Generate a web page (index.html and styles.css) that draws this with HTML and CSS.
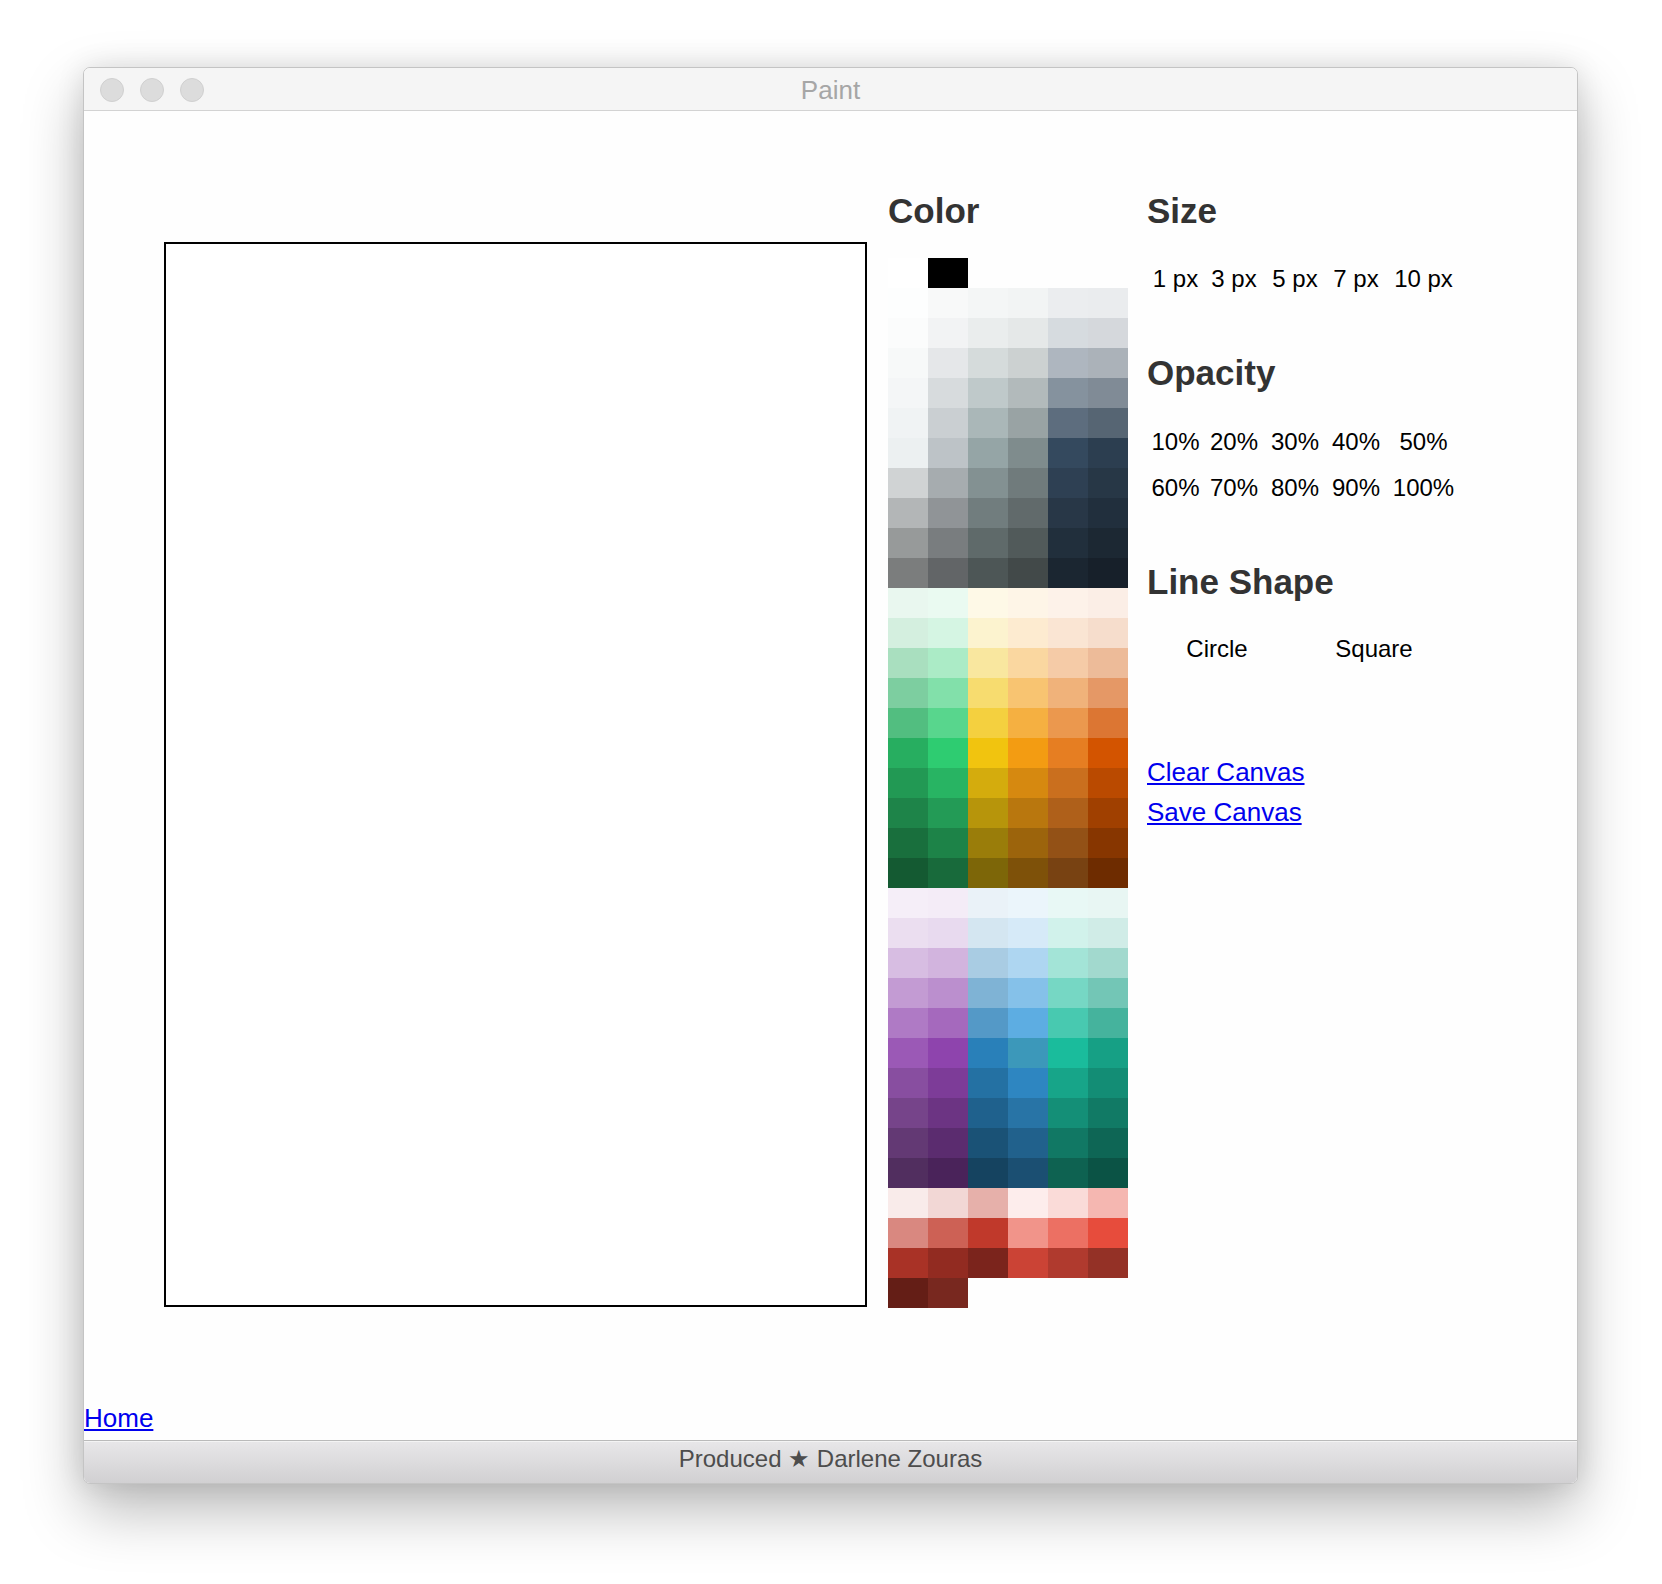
FILE: index.html
```html
<!DOCTYPE html>
<html lang="en">
<head>
<meta charset="utf-8">
<title>Paint</title>
<link rel="stylesheet" href="styles.css">
</head>
<body>
<div class="window">
  <div class="titlebar">
    <div class="lights"><span class="light"></span><span class="light"></span><span class="light"></span></div>
    <div class="title">Paint</div>
    <div></div>
  </div>
  <div class="content">
    <div class="main">
      <div class="canvas"></div>
      <div class="color-col">
        <h2 class="heading">Color</h2>
        <div class="palette-top">
          <i class="sw" style="background:#ffffff"></i><i class="sw" style="background:#000000"></i>
        </div>
        <div class="palette">
          <i style="background:#FDFEFE"></i><i style="background:#F8F9F9"></i><i style="background:#F4F6F6"></i><i style="background:#F2F4F4"></i><i style="background:#EBEDEF"></i><i style="background:#EAECEE"></i>
          <i style="background:#FBFCFC"></i><i style="background:#F2F3F4"></i><i style="background:#EAEDED"></i><i style="background:#E5E8E8"></i><i style="background:#D6DBDF"></i><i style="background:#D5D8DC"></i>
          <i style="background:#F7F9F9"></i><i style="background:#E5E7E9"></i><i style="background:#D5DBDB"></i><i style="background:#CCD1D1"></i><i style="background:#AEB6BF"></i><i style="background:#ABB2B9"></i>
          <i style="background:#F4F6F7"></i><i style="background:#D7DBDD"></i><i style="background:#BFC9CA"></i><i style="background:#B2BABB"></i><i style="background:#85929E"></i><i style="background:#808B96"></i>
          <i style="background:#F0F3F4"></i><i style="background:#CACFD2"></i><i style="background:#AAB7B8"></i><i style="background:#99A3A4"></i><i style="background:#5D6D7E"></i><i style="background:#566573"></i>
          <i style="background:#ECF0F1"></i><i style="background:#BDC3C7"></i><i style="background:#95A5A6"></i><i style="background:#7F8C8D"></i><i style="background:#34495E"></i><i style="background:#2C3E50"></i>
          <i style="background:#D0D3D4"></i><i style="background:#A6ACAF"></i><i style="background:#839192"></i><i style="background:#707B7C"></i><i style="background:#2E4053"></i><i style="background:#273746"></i>
          <i style="background:#B3B6B7"></i><i style="background:#909497"></i><i style="background:#717D7E"></i><i style="background:#616A6B"></i><i style="background:#283747"></i><i style="background:#212F3D"></i>
          <i style="background:#979A9A"></i><i style="background:#797D7F"></i><i style="background:#5F6A6A"></i><i style="background:#515A5A"></i><i style="background:#212F3C"></i><i style="background:#1C2833"></i>
          <i style="background:#7B7D7D"></i><i style="background:#626567"></i><i style="background:#4D5656"></i><i style="background:#424949"></i><i style="background:#1B2631"></i><i style="background:#17202A"></i>

          <i style="background:#E9F7EF"></i><i style="background:#EAFAF1"></i><i style="background:#FEF9E7"></i><i style="background:#FEF5E7"></i><i style="background:#FDF2E9"></i><i style="background:#FBEEE6"></i>
          <i style="background:#D4EFDF"></i><i style="background:#D5F5E3"></i><i style="background:#FCF3CF"></i><i style="background:#FDEBD0"></i><i style="background:#FAE5D3"></i><i style="background:#F6DDCC"></i>
          <i style="background:#A9DFBF"></i><i style="background:#ABEBC6"></i><i style="background:#F9E79F"></i><i style="background:#FAD7A0"></i><i style="background:#F5CBA7"></i><i style="background:#EDBB99"></i>
          <i style="background:#7DCEA0"></i><i style="background:#82E0AA"></i><i style="background:#F7DC6F"></i><i style="background:#F8C471"></i><i style="background:#F0B27A"></i><i style="background:#E59866"></i>
          <i style="background:#52BE80"></i><i style="background:#58D68D"></i><i style="background:#F4D03F"></i><i style="background:#F5B041"></i><i style="background:#EB984E"></i><i style="background:#DC7633"></i>
          <i style="background:#27AE60"></i><i style="background:#2ECC71"></i><i style="background:#F1C40F"></i><i style="background:#F39C12"></i><i style="background:#E67E22"></i><i style="background:#D35400"></i>
          <i style="background:#229954"></i><i style="background:#28B463"></i><i style="background:#D4AC0D"></i><i style="background:#D68910"></i><i style="background:#CA6F1E"></i><i style="background:#BA4A00"></i>
          <i style="background:#1E8449"></i><i style="background:#239B56"></i><i style="background:#B7950B"></i><i style="background:#B9770E"></i><i style="background:#AF601A"></i><i style="background:#A04000"></i>
          <i style="background:#196F3D"></i><i style="background:#1D8348"></i><i style="background:#9A7D0A"></i><i style="background:#9C640C"></i><i style="background:#935116"></i><i style="background:#873600"></i>
          <i style="background:#145A32"></i><i style="background:#186A3B"></i><i style="background:#7D6608"></i><i style="background:#7E5109"></i><i style="background:#784212"></i><i style="background:#6E2C00"></i>

          <i style="background:#F5EEF8"></i><i style="background:#F4ECF7"></i><i style="background:#EAF2F8"></i><i style="background:#EBF5FB"></i><i style="background:#E8F8F5"></i><i style="background:#E8F6F3"></i>
          <i style="background:#EBDEF0"></i><i style="background:#E8DAEF"></i><i style="background:#D4E6F1"></i><i style="background:#D6EAF8"></i><i style="background:#D1F2EB"></i><i style="background:#D0ECE7"></i>
          <i style="background:#D7BDE2"></i><i style="background:#D2B4DE"></i><i style="background:#A9CCE3"></i><i style="background:#AED6F1"></i><i style="background:#A3E4D7"></i><i style="background:#A2D9CE"></i>
          <i style="background:#C39BD3"></i><i style="background:#BB8FCE"></i><i style="background:#7FB3D5"></i><i style="background:#85C1E9"></i><i style="background:#76D7C4"></i><i style="background:#73C6B6"></i>
          <i style="background:#AF7AC5"></i><i style="background:#A569BD"></i><i style="background:#5499C7"></i><i style="background:#5DADE2"></i><i style="background:#48C9B0"></i><i style="background:#45B39D"></i>
          <i style="background:#9B59B6"></i><i style="background:#8E44AD"></i><i style="background:#2980B9"></i><i style="background:#3C98BA"></i><i style="background:#1ABC9C"></i><i style="background:#16A085"></i>
          <i style="background:#884EA0"></i><i style="background:#7D3C98"></i><i style="background:#2471A3"></i><i style="background:#2E86C1"></i><i style="background:#17A589"></i><i style="background:#138D75"></i>
          <i style="background:#76448A"></i><i style="background:#6C3483"></i><i style="background:#1F618D"></i><i style="background:#2874A6"></i><i style="background:#148F77"></i><i style="background:#117A65"></i>
          <i style="background:#633974"></i><i style="background:#5B2C6F"></i><i style="background:#1A5276"></i><i style="background:#21618C"></i><i style="background:#117864"></i><i style="background:#0E6655"></i>
          <i style="background:#512E5F"></i><i style="background:#4A235A"></i><i style="background:#154360"></i><i style="background:#1B4F72"></i><i style="background:#0E6251"></i><i style="background:#0B5345"></i>

          <i style="background:#F9EBEA"></i><i style="background:#F2D7D5"></i><i style="background:#E6B0AA"></i><i style="background:#FDEDEC"></i><i style="background:#FADBD8"></i><i style="background:#F5B7B1"></i>
          <i style="background:#D98880"></i><i style="background:#CD6155"></i><i style="background:#C0392B"></i><i style="background:#F1948A"></i><i style="background:#EC7063"></i><i style="background:#E74C3C"></i>
          <i style="background:#A93226"></i><i style="background:#922B21"></i><i style="background:#7B241C"></i><i style="background:#CB4335"></i><i style="background:#B03A2E"></i><i style="background:#943126"></i>
          <i style="background:#641E16"></i><i style="background:#78281F"></i>
        </div>
      </div>
      <div class="controls">
        <h2 class="heading">Size</h2>
        <div class="choice-grid size-row">
          <span>1 px</span><span>3 px</span><span>5 px</span><span>7 px</span><span>10 px</span>
        </div>
        <h2 class="heading opacity-h">Opacity</h2>
        <div class="choice-grid opacity-grid">
          <span>10%</span><span>20%</span><span>30%</span><span>40%</span><span>50%</span>
          <span>60%</span><span>70%</span><span>80%</span><span>90%</span><span>100%</span>
        </div>
        <h2 class="heading shape-h">Line Shape</h2>
        <div class="shape-row">
          <span>Circle</span><span>Square</span>
        </div>
        <div class="links">
          <a href="#">Clear Canvas</a>
          <a href="#">Save Canvas</a>
        </div>
      </div>
    </div>
    <a class="home" href="#">Home</a>
  </div>
  <footer class="footer">Produced ★ Darlene Zouras</footer>
</div>
</body>
</html>
```

FILE: styles.css
```css
html, body {
  margin: 0;
  padding: 0;
  background: #ffffff;
}

body {
  font-family: "Liberation Sans", Arial, Helvetica, sans-serif;
  padding-top: 67px;
  padding-bottom: 100px;
}

.window {
  width: 1495px;
  height: 1417px;
  margin-left: 83px;
  box-sizing: border-box;
  border: 1px solid #c4c4c4;
  border-radius: 7px;
  display: flex;
  flex-direction: column;
  overflow: hidden;
  background: #fefefe;
  box-shadow: 0 26px 60px rgba(0, 0, 0, 0.28), 0 0 28px rgba(0, 0, 0, 0.10);
}

.titlebar {
  height: 43px;
  flex: none;
  box-sizing: border-box;
  border-bottom: 1px solid #d3d3d3;
  background: #f5f5f5;
  display: grid;
  grid-template-columns: 1fr auto 1fr;
  align-items: center;
}

.lights {
  display: flex;
  gap: 16px;
  padding-left: 16px;
  padding-top: 1px;
}

.light {
  width: 24px;
  height: 24px;
  box-sizing: border-box;
  border-radius: 50%;
  background: #dcdcdc;
  border: 1px solid #d0d0d0;
}

.title {
  font-size: 26px;
  color: #a6a6a6;
  line-height: 30px;
  padding-top: 2px;
}

.content {
  flex: 1;
  display: flex;
  flex-direction: column;
}

.main {
  display: flex;
  align-items: flex-start;
  padding: 80px 0 0 80px;
}

.canvas {
  width: 703px;
  height: 1065px;
  box-sizing: border-box;
  border: 2px solid #000000;
  background: #ffffff;
  margin-top: 51px;
  flex: none;
}

.color-col {
  margin-left: 21px;
  width: 240px;
  flex: none;
}

.heading {
  margin: 0;
  font-size: 35px;
  line-height: 40px;
  font-weight: bold;
  color: #333333;
  white-space: nowrap;
}

.palette-top {
  margin-top: 27px;
  display: flex;
}

.palette-top .sw {
  display: block;
  width: 40px;
  height: 30px;
}

.palette {
  display: grid;
  grid-template-columns: repeat(6, 40px);
  grid-auto-rows: 30px;
}

.palette i {
  display: block;
}

.controls {
  margin-left: 19px;
  flex: none;
}

.choice-grid {
  display: grid;
  grid-template-columns: 57px 60px 62px 60px 75px;
  font-size: 24px;
  line-height: 28px;
  text-align: center;
  color: #000000;
  white-space: nowrap;
}

.size-row {
  margin-top: 34px;
}

.opacity-h {
  margin-top: 60px;
}

.opacity-grid {
  margin-top: 35px;
  row-gap: 18px;
}

.shape-h {
  margin-top: 60px;
}

.shape-row {
  margin-top: 33px;
  display: grid;
  grid-template-columns: 140px 174px;
  font-size: 24px;
  line-height: 28px;
  text-align: center;
  color: #000000;
}

.links {
  margin-top: 89px;
  display: flex;
  flex-direction: column;
  align-items: flex-start;
}

.links a,
.home {
  font-size: 26px;
  line-height: 40px;
  color: #0000ee;
  text-decoration: underline;
}

.home {
  margin-top: auto;
  margin-bottom: 7px;
  line-height: 30px;
  align-self: flex-start;
}

.footer {
  height: 43px;
  flex: none;
  box-sizing: border-box;
  border-top: 1px solid #bababa;
  box-shadow: inset 0 1px 0 #f4f4f4;
  background: linear-gradient(#e8e7e9, #d1d0d2);
  text-align: center;
  font-size: 24px;
  line-height: 36px;
  color: #4d4d4d;
}
```
